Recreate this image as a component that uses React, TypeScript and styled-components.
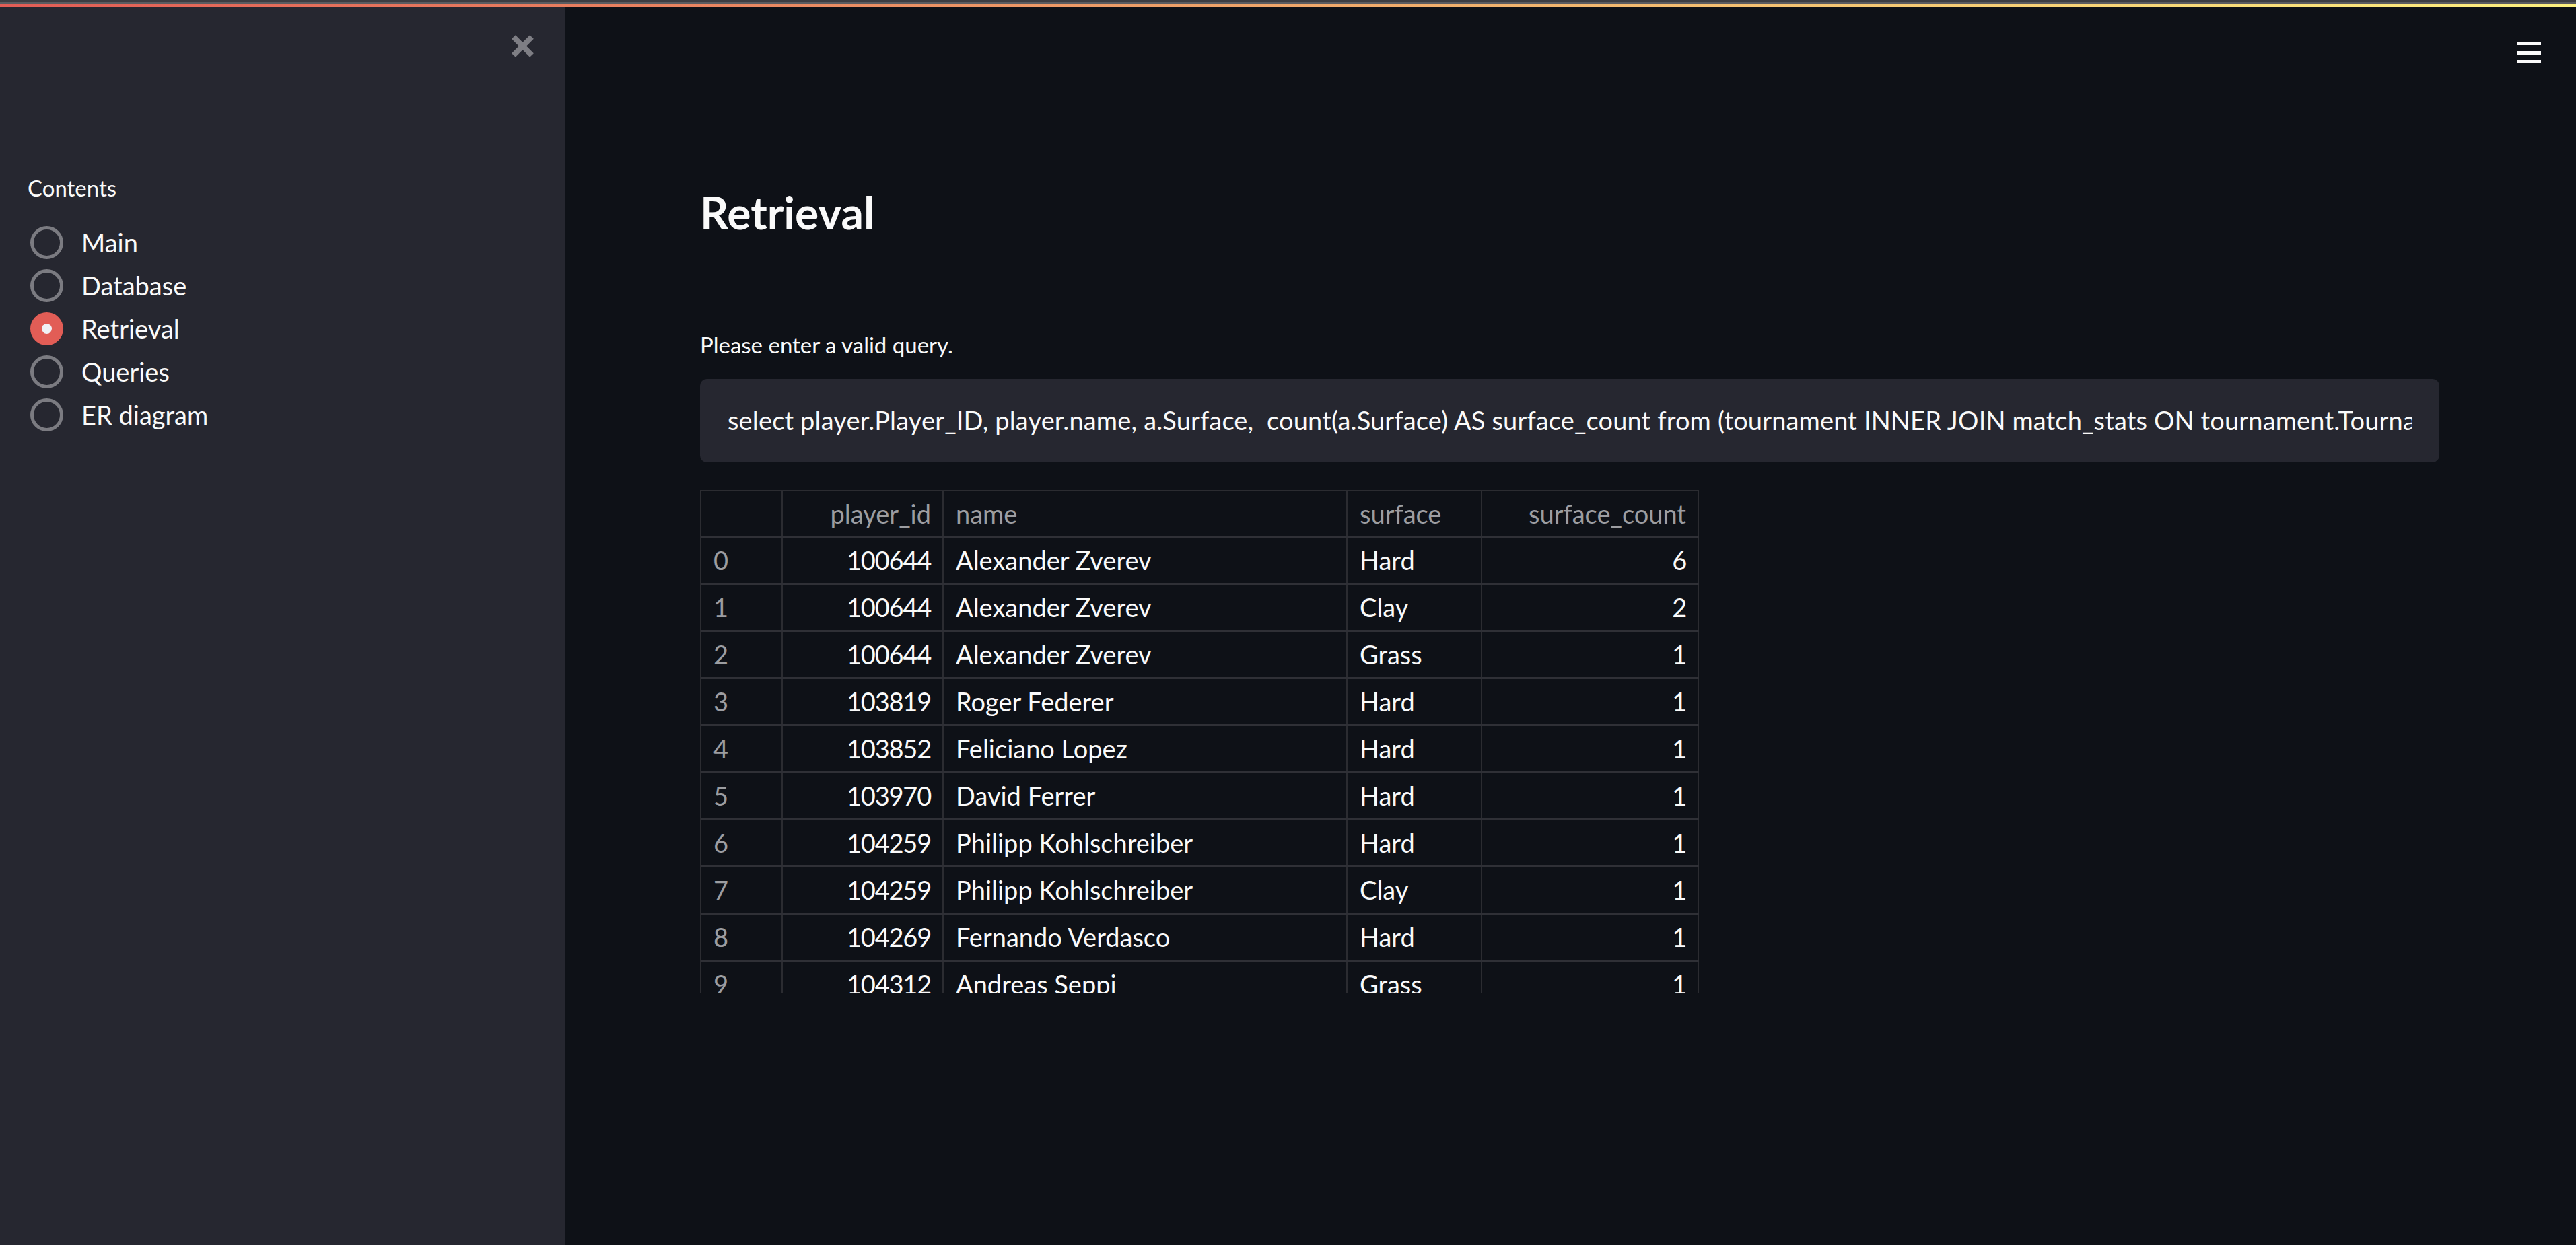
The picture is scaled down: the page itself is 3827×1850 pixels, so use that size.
import React from "react";
import styled, { createGlobalStyle } from "styled-components";

const GlobalStyle = createGlobalStyle`
  html, body {
    margin: 0;
    padding: 0;
    background: #0e1117;
  }
  body {
    font-family: Lato, "Noto Sans", sans-serif;
    color: #fafafa;
    overflow: hidden;
  }
  * {
    box-sizing: border-box;
  }
`;

const Shell = styled.div`
  display: flex;
  flex-direction: column;
  width: 100vw;
  height: 100vh;
`;

const Decoration = styled.div`
  flex: none;
  height: 11px;
  background:
    linear-gradient(to bottom, #3c3d42 0 3px, #5a5b60 3px 6px, transparent 6px),
    linear-gradient(90deg, #e25d56, #fdf07f);
`;

const Body = styled.div`
  flex: 1;
  display: flex;
  min-height: 0;
`;

const Sidebar = styled.aside`
  flex: none;
  width: 840px;
  background: #262730;
  padding: 40px 46px 0 41px;
  display: flex;
  flex-direction: column;
`;

const CloseRow = styled.div`
  display: flex;
  justify-content: flex-end;
  height: 35px;
`;

const CloseButton = styled.button`
  border: none;
  background: none;
  padding: 0;
  width: 35px;
  height: 35px;
  color: #7e7e84;
  display: flex;
`;

const NavLabel = styled.div`
  margin-top: 174px;
  font-size: 33px;
  line-height: 1.2;
  color: #fafafa;
`;

const RadioList = styled.div`
  margin-top: 29px;
  display: flex;
  flex-direction: column;
`;

const RadioItem = styled.label`
  height: 64px;
  display: flex;
  align-items: center;
  gap: 27px;
  padding-left: 4px;
`;

const RadioCircle = styled.span<{ $checked?: boolean }>`
  flex: none;
  width: 49px;
  height: 49px;
  border-radius: 50%;
  display: flex;
  align-items: center;
  justify-content: center;
  background: ${(p) => (p.$checked ? "#e25d56" : "transparent")};
  border: ${(p) => (p.$checked ? "none" : "5px solid #7b7b81")};
`;

const RadioDot = styled.span`
  width: 15px;
  height: 15px;
  border-radius: 50%;
  background: #f0f2f6;
`;

const RadioText = styled.span`
  font-size: 38px;
  line-height: 1.2;
  color: #fafafa;
`;

const Main = styled.main`
  flex: 1;
  min-width: 0;
  display: flex;
  flex-direction: column;
  background: #0e1117;
`;

const TopBar = styled.header`
  display: flex;
  justify-content: flex-end;
  padding: 51px 52px 0 0;
`;

const MenuButton = styled.button`
  border: none;
  background: none;
  padding: 0;
  width: 36px;
  height: 32px;
  display: flex;
  flex-direction: column;
  justify-content: space-between;
`;

const MenuLine = styled.span`
  display: block;
  height: 5px;
  width: 100%;
  background: #fafafa;
`;

const Content = styled.section`
  padding: 0 203px 0 200px;
  margin-top: 182px;
  display: flex;
  flex-direction: column;
`;

const Title = styled.h1`
  margin: 0;
  font-size: 66px;
  font-weight: 700;
  line-height: 1.2;
  color: #fafafa;
`;

const FieldLabel = styled.div`
  margin-top: 138px;
  font-size: 33px;
  line-height: 1.2;
  color: #fafafa;
`;

const QueryBox = styled.div`
  margin-top: 30px;
  height: 124px;
  background: #262730;
  border-radius: 10px;
  padding: 0 41px;
  display: flex;
  align-items: center;
`;

const QueryText = styled.div`
  flex: 1;
  min-width: 0;
  overflow: hidden;
  white-space: pre;
  font-size: 38px;
  letter-spacing: 0.15px;
  line-height: 1.2;
  color: #fafafa;
`;

const Table = styled.div`
  margin-top: 41px;
  width: 1484px;
  height: 747px;
  overflow: hidden;
  border-left: 2px solid #2b2c31;
  border-top: 2px solid #2b2c31;
  display: flex;
  flex-direction: column;
`;

const Row = styled.div<{ $header?: boolean }>`
  flex: none;
  display: grid;
  grid-template-columns: 121px 239px 600px 200px 322px;
  height: ${(p) => (p.$header ? "69px" : "70px")};
  border-bottom: 3px solid #2f3036;
`;

const Cell = styled.div<{ $right?: boolean; $muted?: boolean; $num?: boolean }>`
  display: flex;
  align-items: center;
  justify-content: ${(p) => (p.$right ? "flex-end" : "flex-start")};
  padding: 0 17px 0 18px;
  border-right: 2px solid #2b2c31;
  font-size: 38px;
  letter-spacing: ${(p) => (p.$num ? "-1.2px" : "0")};
  white-space: nowrap;
  overflow: hidden;
  color: ${(p) => (p.$muted ? "#9c9da1" : "#fafafa")};
`;

const navItems = ["Main", "Database", "Retrieval", "Queries", "ER diagram"];

const rows: [number, string, string, string, number][] = [
  [0, "100644", "Alexander Zverev", "Hard", 6],
  [1, "100644", "Alexander Zverev", "Clay", 2],
  [2, "100644", "Alexander Zverev", "Grass", 1],
  [3, "103819", "Roger Federer", "Hard", 1],
  [4, "103852", "Feliciano Lopez", "Hard", 1],
  [5, "103970", "David Ferrer", "Hard", 1],
  [6, "104259", "Philipp Kohlschreiber", "Hard", 1],
  [7, "104259", "Philipp Kohlschreiber", "Clay", 1],
  [8, "104269", "Fernando Verdasco", "Hard", 1],
  [9, "104312", "Andreas Seppi", "Grass", 1],
];

const query =
  "select player.Player_ID, player.name, a.Surface,  count(a.Surface) AS surface_count from (tournament INNER JOIN match_stats ON tournament.Tournament_ID = match_stats.Tournament_ID) AS a INNER JOIN player ON a.Winner_ID = player.Player_ID GROUP BY player.Player_ID, a.Surface";

export default function App() {
  return (
    <>
      <GlobalStyle />
      <Shell>
        <Decoration />
        <Body>
          <Sidebar>
            <CloseRow>
              <CloseButton aria-label="Close sidebar">
                <svg width="35" height="35" viewBox="0 0 35 35">
                  <path
                    d="M4 4 L31 31 M31 4 L4 31"
                    stroke="currentColor"
                    strokeWidth="8"
                    strokeLinecap="butt"
                    fill="none"
                  />
                </svg>
              </CloseButton>
            </CloseRow>
            <NavLabel>Contents</NavLabel>
            <RadioList>
              {navItems.map((item) => (
                <RadioItem key={item}>
                  <RadioCircle $checked={item === "Retrieval"}>
                    {item === "Retrieval" && <RadioDot />}
                  </RadioCircle>
                  <RadioText>{item}</RadioText>
                </RadioItem>
              ))}
            </RadioList>
          </Sidebar>
          <Main>
            <TopBar>
              <MenuButton aria-label="Menu">
                <MenuLine />
                <MenuLine />
                <MenuLine />
              </MenuButton>
            </TopBar>
            <Content>
              <Title>Retrieval</Title>
              <FieldLabel>Please enter a valid query.</FieldLabel>
              <QueryBox>
                <QueryText>{query}</QueryText>
              </QueryBox>
              <Table>
                <Row $header>
                  <Cell />
                  <Cell $right $muted>player_id</Cell>
                  <Cell $muted>name</Cell>
                  <Cell $muted>surface</Cell>
                  <Cell $right $muted>surface_count</Cell>
                </Row>
                {rows.map(([idx, id, name, surface, count]) => (
                  <Row key={idx}>
                    <Cell $muted $num>{idx}</Cell>
                    <Cell $right $num>{id}</Cell>
                    <Cell>{name}</Cell>
                    <Cell>{surface}</Cell>
                    <Cell $right $num>{count}</Cell>
                  </Row>
                ))}
              </Table>
            </Content>
          </Main>
        </Body>
      </Shell>
    </>
  );
}
